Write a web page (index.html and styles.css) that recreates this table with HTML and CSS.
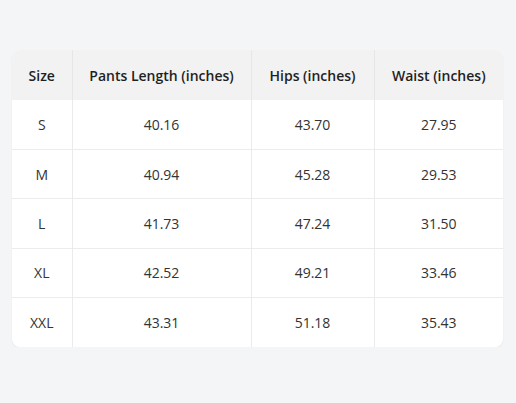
FILE: index.html
```html
<!DOCTYPE html>
<html lang="en">
<head>
<meta charset="utf-8">
<title>Size chart</title>
<link rel="stylesheet" href="styles.css">
</head>
<body>
<div class="card">
  <table class="chart">
    <colgroup>
      <col class="c1"><col class="c2"><col class="c3"><col class="c4">
    </colgroup>
    <thead>
      <tr><th>Size</th><th>Pants Length (inches)</th><th>Hips (inches)</th><th>Waist (inches)</th></tr>
    </thead>
    <tbody>
      <tr><td>S</td><td>40.16</td><td>43.70</td><td>27.95</td></tr>
      <tr><td>M</td><td>40.94</td><td>45.28</td><td>29.53</td></tr>
      <tr><td>L</td><td>41.73</td><td>47.24</td><td>31.50</td></tr>
      <tr><td>XL</td><td>42.52</td><td>49.21</td><td>33.46</td></tr>
      <tr><td>XXL</td><td>43.31</td><td>51.18</td><td>35.43</td></tr>
    </tbody>
  </table>
</div>
</body>
</html>
```
FILE: styles.css
```css
html, body {
  margin: 0;
  padding: 0;
  background: #f4f5f7;
}
body {
  padding: 50px 13px 0 12px;
  font-family: "Open Sans", "Noto Sans", sans-serif;
}
.card {
  width: 491px;
  background: #ffffff;
  border-radius: 8px;
  overflow: hidden;
  box-shadow: 0 1px 2px rgba(0, 0, 0, 0.06);
}
.chart {
  width: 100%;
  border-collapse: collapse;
  table-layout: fixed;
  font-size: 14px;
  color: #333333;
}
.c1 { width: 60px; }
.c2 { width: 179px; }
.c3 { width: 123px; }
.c4 { width: 129px; }
.chart th, .chart td {
  text-align: center;
  padding: 0;
  border-left: 1px solid #ebebeb;
}
.chart th:first-child, .chart td:first-child {
  border-left: none;
}
.chart th {
  height: 50px;
  background: #f2f2f2;
  font-weight: 600;
  color: #1f1f1f;
  border-left-color: #e6e6e6;
}
.chart td {
  height: 48.4px;
  border-top: 1px solid #ececec;
  font-weight: 400;
}
.chart tbody tr:first-child td {
  border-top: none;
  height: 49px;
}
```
